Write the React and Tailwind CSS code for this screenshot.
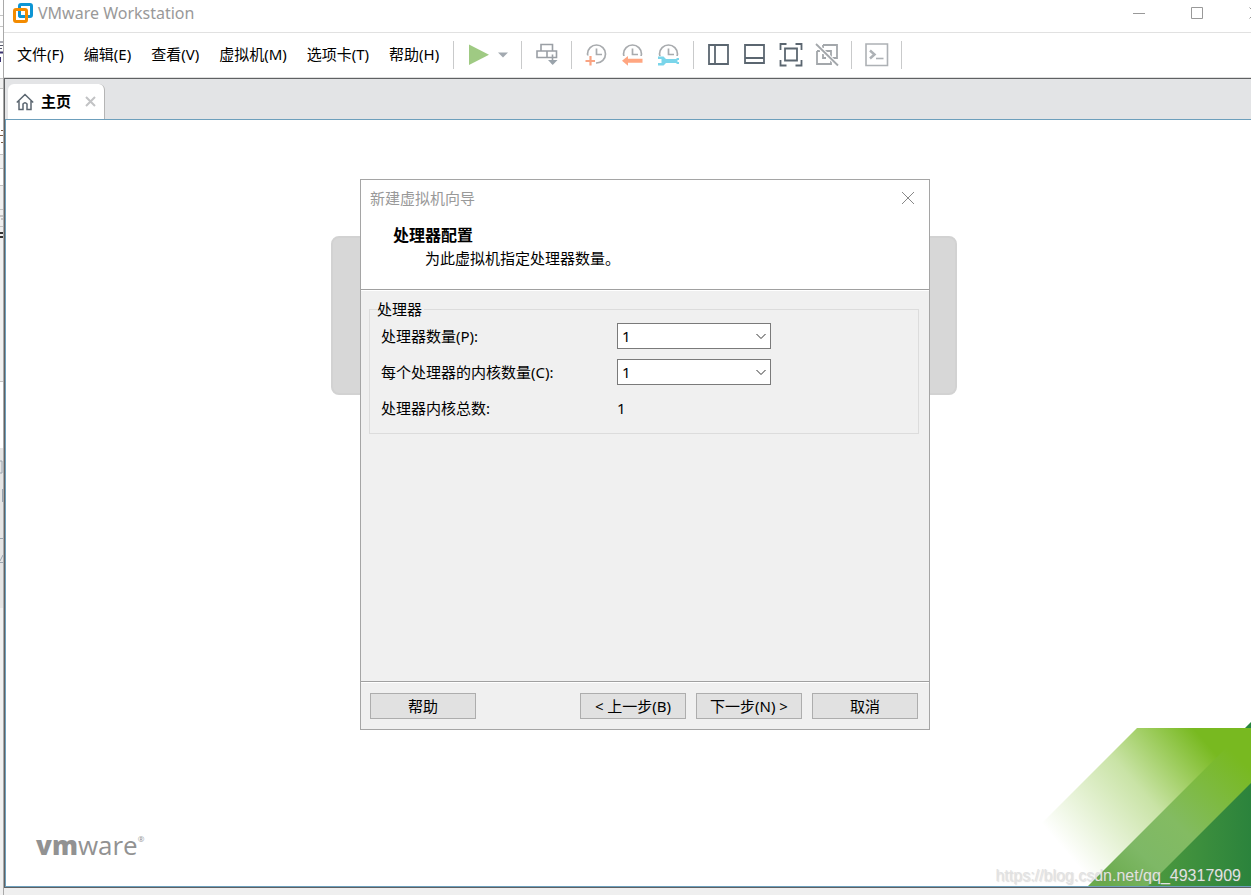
import { useState } from 'react';

const menus = ['文件(F)', '编辑(E)', '查看(V)', '虚拟机(M)', '选项卡(T)', '帮助(H)'];

function Logo() {
  return (
    <svg width="20" height="20" viewBox="0 0 20 20" fill="none" strokeWidth="3" className="shrink-0">
      <rect x="6.5" y="1.5" width="12" height="12" rx="1.5" stroke="#0d95d4" />
      <rect x="1.5" y="6.5" width="12" height="12" rx="1.5" stroke="#f38b00" />
      <path d="M6.5 8.500v3.500a1.500 1.500 0 0 0 1.500 1.500h3.500" stroke="#0d95d4" />
    </svg>
  );
}

function Icon({ children, color = '#5b6670', width = 1.8 }) {
  return (
    <svg width="24" height="24" viewBox="0 0 24 24" fill="none" stroke={color} strokeWidth={width}>
      {children}
    </svg>
  );
}

function ToolButton({ label, children }) {
  return <button type="button" aria-label={label} className="shrink-0">{children}</button>;
}

function Separator() {
  return <span className="w-px h-7 mr-px bg-[#c9cacb] shrink-0" />;
}

function Clock() {
  return (
    <>
      <circle cx="11.5" cy="11" r="9" />
      <path d="M11.5 5.500V11.500H17" />
    </>
  );
}

function Toolbar() {
  return (
    <div className="flex items-center gap-3">
      <Separator />
      <div className="flex items-center gap-1.5">
        <ToolButton label="开机">
          <Icon color="none"><path d="M2 1.500v20.500L22 11.700z" fill="#9fca83" /></Icon>
        </ToolButton>
        <ToolButton label="电源选项">
          <svg width="12" height="24" viewBox="0 0 12 24"><path d="M1 9.500h10l-5 5z" fill="#a2a9b0" /></svg>
        </ToolButton>
      </div>
      <Separator />
      <ToolButton label="发送 Ctrl+Alt+Del">
        <Icon color="#9a9fa5" width={1.6}>
          <path d="M6 1.500h11.500v6.500H6zM2 8h10v6.500H2zM12 8h9.500v6.500H12zM17.500 11.500V21" />
          <path d="M13 17h9.500L17.700 22z" fill="#9aa3ab" stroke="none" />
        </Icon>
      </ToolButton>
      <Separator />
      <ToolButton label="拍摄快照">
        <Icon color="#a8abae" width={1.7}>
          <Clock />
          <path d="M0 12.500h7.500v4h3.500V24H0z" fill="#fff" stroke="none" />
          <path d="M5.500 13v9.500M.5 18h9.500" stroke="#f9a382" strokeWidth="2.200" />
        </Icon>
      </ToolButton>
      <ToolButton label="恢复快照">
        <Icon color="#a8abae" width={1.7}>
          <Clock />
          <path d="M0 13h24v11H0z" fill="#fff" stroke="none" />
          <path d="M1 17.800l6-4.800v2.800h14.500v4H7v3z" fill="#ffa681" stroke="none" />
        </Icon>
      </ToolButton>
      <ToolButton label="管理快照">
        <Icon color="#a8abae" width={1.7}>
          <Clock />
          <path d="M0 13h24v11H0z" fill="#fff" stroke="none" />
          <path d="M1 13.500h5.500l2.500 2.500h10l1-1h2v2h-1.500v2h1.500v2h-2l-1-1H9L6.500 22.500H1v-2.500h3.500v-4H1z" fill="#7ad5ea" stroke="none" />
        </Icon>
      </ToolButton>
      <Separator />
      <ToolButton label="显示库">
        <Icon><path d="M2 2h19v19H2zM8 2v19" /></Icon>
      </ToolButton>
      <ToolButton label="缩略图栏">
        <Icon><path d="M2 2h19v18H2zM2 15h19" /></Icon>
      </ToolButton>
      <ToolButton label="全屏">
        <Icon><path d="M6 5.500h12v12H6zM1.500 7V1h6M16.500 1h6v6M22.500 17v5.500h-6M7.500 22.500h-6V17" /></Icon>
      </ToolButton>
      <ToolButton label="Unity">
        <Icon color="#a3a7ab">
          <path d="M8 2h14v13h-5M2 8v13h14V8H7M8 2v3M2 8h3M11 15H8v-4" />
          <path d="M1 1l22 21.500" stroke="#fff" strokeWidth="4" />
          <path d="M1 1l22 21.500" strokeWidth="1.800" />
        </Icon>
      </ToolButton>
      <Separator />
      <ToolButton label="控制台">
        <Icon color="#adb1b5" width={1.6}>
          <path d="M1 1h21.500v21.500H1z" />
          <path d="M5 7.500l4.500 4-4.500 4" strokeWidth="2.500" />
          <path d="M11 15.500h7.500" />
        </Icon>
      </ToolButton>
      <Separator />
    </div>
  );
}

function TitleBar() {
  return (
    <header className="flex items-center h-[33px] pl-[9px] pb-1.5 border-b border-[#e1e1e1]">
      <Logo />
      <h1 className="ml-[5px] flex-1 text-[16px] leading-6 text-[#999]">VMware Workstation</h1>
      {[
        ['最小化', 'M0 6.500h12'],
        ['最大化', 'M.5.5h11v11H.5z'],
        ['关闭', 'M.5.5l11 11M11.500.5l-11 11'],
      ].map(([label, d]) => (
        <button key={label} type="button" aria-label={label} className="w-[58px] flex justify-center">
          <svg width="12" height="12" viewBox="0 0 12 12" fill="none" stroke="#999"><path d={d} /></svg>
        </button>
      ))}
    </header>
  );
}

function TabBar() {
  return (
    <div className="flex items-end h-[41px] pl-[3px] border-b border-[#6d9fbc] bg-[#e3e4e6]">
      <div className="flex items-center h-[35px] w-[97px] pl-2 rounded-t-md border-r border-[#b5b5b5] bg-white">
        <svg width="18" height="18" viewBox="0 0 18 18" fill="none" stroke="#5b6670" strokeWidth="1.5">
          <path d="M.8 9.500L9 1.500l8.200 8M3 8v8.500h4V11q2-2.500 4 0v5.500h4V8" />
        </svg>
        <span className="ml-[7px] pb-0.5 w-10 text-[15px] leading-6 font-bold">主页</span>
        <button type="button" aria-label="关闭标签" className="ml-1">
          <svg width="11" height="11" viewBox="0 0 11 11" stroke="#c2c3c5" strokeWidth="2"><path d="M1 1l9 9M10 1l-9 9" /></svg>
        </button>
      </div>
    </div>
  );
}

function CountSelect({ id, label, value, onChange }) {
  return (
    <>
      <label htmlFor={id}>{label}</label>
      <div className="relative w-[154px]">
        <select
          id={id}
          value={value}
          onChange={e => onChange(Number(e.target.value))}
          className="block w-full h-[26px] pl-1 pb-0.5 border border-[#7a7a7a] bg-white appearance-none leading-6"
        >
          {[1, 2, 4, 8].map(n => <option key={n} value={n}>{n}</option>)}
        </select>
        <svg className="absolute right-[5px] top-[10px] pointer-events-none" width="10" height="7" viewBox="0 0 10 7" fill="none" stroke="#333">
          <path d="M.5 1L5 5.500 9.500 1" />
        </svg>
      </div>
    </>
  );
}

function WizardButton({ children }) {
  return (
    <button type="button" className="w-[106px] h-[26px] border border-[#adadad] bg-[#e1e1e1] leading-6 whitespace-nowrap">
      {children}
    </button>
  );
}

function Wizard() {
  const [cpus, setCpus] = useState(1);
  const [cores, setCores] = useState(1);

  return (
    <section role="dialog" aria-label="新建虚拟机向导" className="[grid-area:1/1] z-10 flex flex-col w-[570px] h-[551px] mt-[59px] border border-[#a5a5a5] bg-[#f0f0f0] text-[15px] leading-6">
      <div className="h-[110px] bg-white border-b border-[#a0a0a0] shrink-0">
        <div className="flex items-center justify-between h-9 pl-[9px] pr-[14px] text-[#999]">
          <span>新建虚拟机向导</span>
          <button type="button" aria-label="关闭">
            <svg width="14" height="14" viewBox="0 0 14 14" stroke="#888"><path d="M1 1l12 12M13 1L1 13" /></svg>
          </button>
        </div>
        <h2 className="pl-8 pt-[7px] text-[16px] leading-6 font-bold">处理器配置</h2>
        <p className="pl-16 leading-[22px]">为此虚拟机指定处理器数量。</p>
      </div>
      <div className="flex-1 pl-2 pr-[10px] pt-2 border-t border-white">
        <fieldset className="border border-[#dcdcdc] pl-[11px] pb-3">
          <legend className="-ml-1 pr-0.5 leading-5">处理器</legend>
          <div className="grid grid-cols-[236px_1fr] auto-rows-[26px] items-center gap-y-[10px] pt-1">
            <CountSelect id="cpus" label="处理器数量(P):" value={cpus} onChange={setCpus} />
            <CountSelect id="cores" label="每个处理器的内核数量(C):" value={cores} onChange={setCores} />
            <span>处理器内核总数:</span>
            <output htmlFor="cpus cores">{cpus * cores}</output>
          </div>
        </fieldset>
      </div>
      <div className="border-t border-[#a0a0a0]">
        <div className="flex items-center gap-[10px] h-[47px] pl-[9px] pr-[11px] border-t border-white">
          <WizardButton>帮助</WizardButton>
          <span className="flex-1" />
          <WizardButton>&lt; 上一步(B)</WizardButton>
          <WizardButton>下一步(N) &gt;</WizardButton>
          <WizardButton>取消</WizardButton>
        </div>
      </div>
    </section>
  );
}

function CornerArt() {
  return (
    <svg className="absolute right-0 bottom-0" width="254" height="190" viewBox="1030 696 254 190">
      <defs>
        <linearGradient id="pale" gradientUnits="userSpaceOnUse" x1="1066" y1="852" x2="1200" y2="736">
          <stop offset="0" stopColor="#78b920" stopOpacity="0" />
          <stop offset=".55" stopColor="#78b920" stopOpacity=".4" />
          <stop offset="1" stopColor="#78b920" />
        </linearGradient>
        <linearGradient id="band" gradientUnits="userSpaceOnUse" x1="1110" y1="886" x2="1232" y2="752">
          <stop offset="0" stopColor="#6aaa4c" />
          <stop offset=".25" stopColor="#7eb866" />
          <stop offset=".5" stopColor="#83bb62" />
          <stop offset="1" stopColor="#78b920" />
        </linearGradient>
        <linearGradient id="deep" gradientUnits="userSpaceOnUse" x1="1150" y1="0" x2="1251" y2="0">
          <stop offset="0" stopColor="#4d9a3e" />
          <stop offset="1" stopColor="#2b833c" />
        </linearGradient>
      </defs>
      <path d="M1137 728h148v158H979z" fill="url(#pale)" />
      <path d="M1245 728l39-39v39z" fill="#28853f" />
      <path d="M1088 886l158-158h38v158z" fill="url(#band)" />
      <path d="M1148 886l136-136v136z" fill="url(#deep)" />
    </svg>
  );
}

// sliver of the window that sits behind this one
function BackWindow() {
  return (
    <div className="w-1 shrink-0 border-r border-[#a9a9a9] bg-[#f0f0f0] flex flex-col">
      <svg width="3" height="620" viewBox="0 0 3 620" fill="none">
        <path d="M0 0h3v78H0zM0 89h3v65H0zM0 169h3v16H0zM0 382h3v66H0z" fill="#fff" />
        <path d="M0 448h3v160H0z" fill="#e5e5e5" />
        <path d="M0 15.500h3M0 26.500h3M0 78.500h3M0 88.500h3M0 154.500h3M0 168.500h3M0 185.500h3M0 209.500h3M0 226.500h3M0 381.500h3" stroke="#c4c4c4" />
        <path d="M0 42h3M0 45.500h3M0 48.500h2" stroke="#55586a" />
        <path d="M0 52.500h3M0 57v5" stroke="#3a3270" strokeWidth="2" />
        <path d="M1 130.500h2M0 135.500h3M1 142.500h2" stroke="#7a5a42" />
        <path d="M0 216h3M1 219h2" stroke="#999" />
        <path d="M0 233h3M0 237h3" stroke="#333" strokeWidth="2" />
        <path d="M0 461h2v12H0M2.500 489v13M0 538.500h3M0 561l3-6M0 562.500h3" stroke="#9aa5b0" />
      </svg>
    </div>
  );
}

export default function App() {
  return (
    <div className="flex min-h-screen overflow-hidden bg-white text-black font-['Noto_Sans','Noto_Sans_CJK_SC',sans-serif]">
      <BackWindow />
      <div className="relative flex flex-col w-[calc(100%+29px)] shrink-0">
        <TitleBar />
        <div className="flex items-center h-[45px] border-b border-[#dedede]">
          <nav className="flex gap-5 pl-[13px] pr-[14px] pb-[3px] text-[15px] leading-6">
            {menus.map(m => <button key={m} type="button" className="whitespace-nowrap">{m}</button>)}
          </nav>
          <Toolbar />
        </div>
        <div className="flex-1 flex flex-col border-t border-l border-b border-[#5f6163]">
          <TabBar />
          <main className="relative flex-1 grid justify-items-center items-start overflow-hidden border-l border-b border-[#6d9fbc] bg-white">
            <div className="[grid-area:1/1] w-[626px] h-[159px] mt-[116px] mr-0.5 rounded-lg border-2 border-[#d2d2d2] bg-[#d7d7d7]" />
            <Wizard />
            <CornerArt />
            <div className="absolute left-[30px] bottom-[21px] flex items-baseline font-['Open_Sans',sans-serif] text-[26px] leading-10 text-[#929292]">
              <span className="font-extrabold">vm</span>
              <span>ware</span>
              <span className="self-start text-[8px] leading-7">®</span>
            </div>
            <span className="absolute right-[43px] bottom-0 font-['Liberation_Sans',sans-serif] text-[16px] leading-5 text-[#e2e2e2] [text-shadow:1px_1px_1px_rgba(120,120,120,0.25)]">
              https://blog.csdn.net/qq_49317909
            </span>
          </main>
        </div>
        <div className="h-[7px] bg-[#efefef]" />
      </div>
    </div>
  );
}
